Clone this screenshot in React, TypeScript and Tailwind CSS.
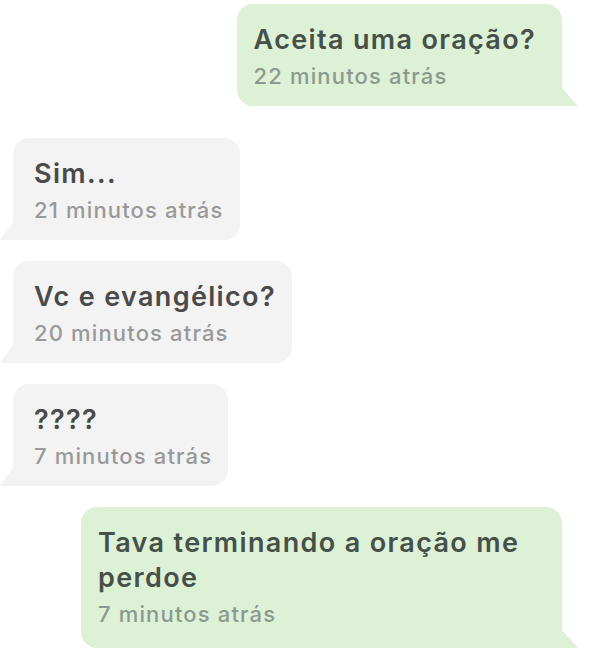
import React from "react";

type Msg = { text: string; time: string; sent: boolean; tall?: boolean };

const msgs: Msg[] = [
  { text: "Aceita uma oração?", time: "22 minutos atrás", sent: true },
  { text: "Sim...", time: "21 minutos atrás", sent: false },
  { text: "Vc e evangélico?", time: "20 minutos atrás", sent: false },
  { text: "????", time: "7 minutos atrás", sent: false },
  { text: "Tava terminando a oração me perdoe", time: "7 minutos atrás", sent: true, tall: true },
];

function Bubble({ m }: { m: Msg }) {
  if (m.sent) {
    return (
      <div className="flex justify-end pr-[37px]">
        <div
          className={
            "relative max-w-[481px] rounded-[16px] rounded-br-none bg-[#dcf1d6] pl-[17px] pr-[26px] pt-[18px] " +
            (m.tall ? "pb-[19px]" : "pb-[15px]")
          }
        >
          <div className="text-[27px] font-semibold leading-[35px] tracking-[1.35px] text-[#465048]">{m.text}</div>
          <div className="mt-[4px] text-[22px] font-medium leading-[30px] tracking-[1.15px] text-[#8c998e]">{m.time}</div>
          <svg className="absolute bottom-0 right-[-16px]" width="16" height="18" viewBox="0 0 16 18">
            <path d="M0 0 L16 18 L0 18 Z" fill="#dcf1d6" />
          </svg>
        </div>
      </div>
    );
  }
  return (
    <div className="flex justify-start pl-[13px]">
      <div className="relative rounded-[16px] rounded-bl-none bg-[#f3f3f3] pl-[21px] pr-[16px] pt-[18px] pb-[15px]">
        <div className="text-[27px] font-semibold leading-[35px] tracking-[1.35px] text-[#4a4a4a]">{m.text}</div>
        <div className="mt-[4px] text-[22px] font-medium leading-[30px] tracking-[1.15px] text-[#999999]">{m.time}</div>
        <svg className="absolute bottom-0 left-[-13px]" width="13" height="18" viewBox="0 0 13 18">
          <path d="M13 0 L0 18 L13 18 Z" fill="#f3f3f3" />
        </svg>
      </div>
    </div>
  );
}

export default function App() {
  return (
    <div className="w-[599px] h-[666px] bg-white overflow-hidden pt-[4px]" style={{ fontFamily: "Inter, 'Open Sans', sans-serif" }}>
      <div className="flex flex-col">
        <Bubble m={msgs[0]} />
        <div className="h-[32px]" />
        <Bubble m={msgs[1]} />
        <div className="h-[21px]" />
        <Bubble m={msgs[2]} />
        <div className="h-[21px]" />
        <Bubble m={msgs[3]} />
        <div className="h-[21px]" />
        <Bubble m={msgs[4]} />
      </div>
    </div>
  );
}
